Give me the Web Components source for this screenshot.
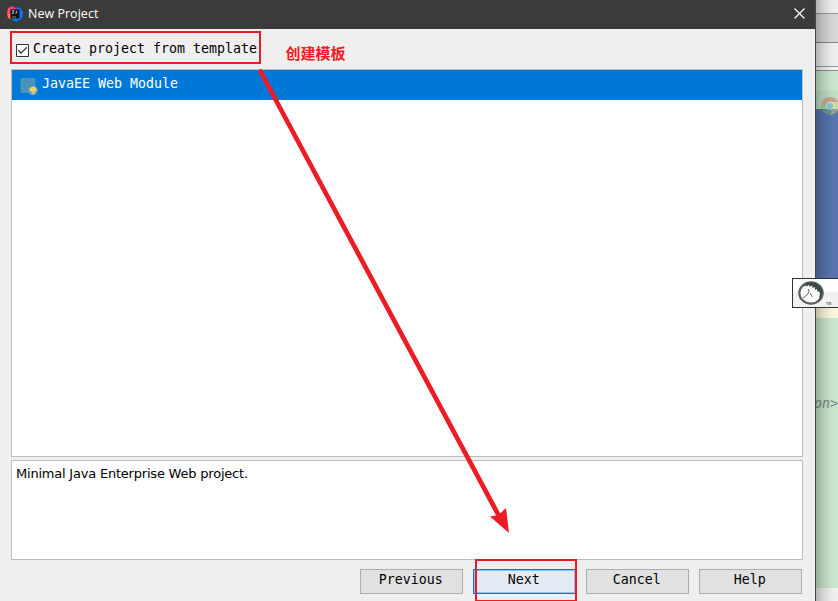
<!DOCTYPE html>
<html lang="en"><head><meta charset="utf-8"><title>New Project</title>
<style>html,body{margin:0;width:838px;height:601px;overflow:hidden;background:#efefef}</style></head>
<body><project-screen></project-screen>
<script>
const define=(name,markup)=>customElements.define(name,class extends HTMLElement{
  connectedCallback(){
    if(this.shadowRoot)return;
    const t=document.createElement('template');t.innerHTML=markup;
    this.attachShadow({mode:'open'}).append(t.content.cloneNode(true));
  }
});
define('title-bar',`<style>
:host{display:flex;align-items:center;height:29px;box-sizing:border-box;background:#3b3b3b;color:#fff;padding:0 10px 2px 7px;font:12.4px "Open Sans","Noto Sans",sans-serif}
.t{margin-left:5px;flex:1;white-space:nowrap;letter-spacing:.08px}
svg{display:block;flex:none}.c{margin-bottom:1px}</style>
<svg width="16" height="16" viewBox="0 0 16 16"><path d="M1 2 6 0 8 3 5 13 1 12 3 8 0 7Z" fill="#fb4b6b"/><path d="M0 7 4 8 5 13 1 12Z" fill="#f57b51"/><path d="M9 1 13 2 16 6 15 12 9 16 5 13 12 10Z" fill="#087cfa"/><path d="M6 0 9 2 10 4 4 6Z" fill="#e4347c"/><path d="M3.4 3.4H12.5V12.5H3.4Z" fill="#15131a"/><path d="M5 4.8H7.4M6.2 5V7.5H5M9.6 4.8V7H8.2" fill="none" stroke="#ccc" stroke-width=".9"/><path d="M5 11H9" stroke="#888"/></svg>
<span class="t"><slot></slot></span>
<svg class="c" width="11" height="11" viewBox="0 0 11 11"><path d="M.5.5 10.5 10.5M10.5.5.5 10.5" stroke="#fff" stroke-width="1.2"/></svg>`);
define('check-option',`<style>
:host{display:flex;align-items:center;height:40px;padding:0 0 0 16px;box-sizing:border-box;font:13.29px/16px "DejaVu Sans Mono",monospace;color:#000}
svg{display:block;margin:3px 4px 0 0}span{white-space:nowrap}</style>
<svg width="13" height="13" viewBox="0 0 13 13"><path d="M.5.5H12.5V12.5H.5Z" fill="#fff" stroke="#333"/><path d="M2.3 6.3 5 9.1 10.8 3.3" fill="none" stroke="#333" stroke-width="1.3"/></svg><span><slot></slot></span>`);
define('template-list',`<style>
:host{display:block;box-sizing:border-box;height:388px;border:1px solid #bcbcbc;background:#fff;margin:0 12px 0 11px}</style><slot></slot>`);
define('template-row',`<style>
:host{display:flex;align-items:center;height:30px;background:#0078d7;color:#fff;padding-left:8px;font:13.29px/16px "DejaVu Sans Mono",monospace}
svg{display:block;margin:3px 4px 0 0}span{margin-top:-2px;white-space:nowrap}</style>
<svg width="18" height="18" viewBox="0 0 18 18"><path d="M.5 0H15.5V15H.5Z" fill="#4793b9"/><circle cx="13" cy="12.5" r="4.7" fill="#6aa6c4"/><path d="M9.5 11 11 9.2 14 8.8 16.4 10.5 16.6 12.6 14.8 13.2 14.3 16 12.6 16.2 12.4 13.6 10 13.2Z" fill="#f5d25b"/></svg><span><slot></slot></span>`);
define('template-description',`<style>
:host{display:block;box-sizing:border-box;height:100px;border:1px solid #bcbcbc;background:#fff;color:#000;margin:3px 12px 0 11px;padding:5px 4px;font:13px/16px "DejaVu Sans",Verdana,sans-serif;letter-spacing:-.21px;white-space:nowrap}</style><slot></slot>`);
define('button-bar',`<style>
:host{display:flex;justify-content:flex-end;gap:10px;padding:9px 13px 0 0}</style><slot></slot>`);
define('dialog-button',`<style>
:host{display:block;box-sizing:border-box;width:103px;height:25px;border:1px solid #adadad;background:#e1e1e1;color:#000;text-align:center;padding:2px 1.4px 0 0;font:13.29px/16px "DejaVu Sans Mono",monospace}
:host([primary]){border-color:#0078d7;background:#e3ecf5;box-shadow:inset 0 0 0 1px #8cc3f2}
</style><span><slot></slot></span>`);
define('project-dialog',`<style>
:host{display:flex;flex-direction:column;width:815px;height:601px;background:#efefef}</style>
<title-bar>New Project</title-bar>
<check-option>Create project from template</check-option>
<template-list><template-row>JavaEE Web Module</template-row></template-list>
<template-description>Minimal Java Enterprise Web project.</template-description>
<button-bar><dialog-button>Previous</dialog-button><dialog-button primary>Next</dialog-button><dialog-button>Cancel</dialog-button><dialog-button>Help</dialog-button></button-bar>`);
define('editor-backdrop',`<style>
:host{display:flex;flex-direction:column;position:relative;box-sizing:border-box;width:23px;height:601px;border-left:1px solid #484848;overflow:hidden;background:#f5f5f5}
div{flex:none;box-sizing:border-box}
.a{height:14px;background:#efefef;border-bottom:1px solid #999}.b{height:29px;background:#d9d9d9;border-bottom:1px solid #858585}
.c{height:24px;background:#f0f0f0;border-bottom:1px solid #999}.d{height:4px;background:#f6f6f6;border-bottom:1px solid #929292}
.e{height:38px;background:linear-gradient(#cbe8cf 20px,#c1dfc5 20px)}.f{height:185px;background:#5875b0}.g{height:24px;background:#fff8df}
.h{height:270px;background:#c9e8ce;display:flex;align-items:flex-start;padding-top:78px;font:italic 13.3px/16px "DejaVu Sans Mono",monospace;color:#7d8580}
.h span{margin-left:-2px;white-space:nowrap}
.i{height:13px;background:#f1f1f1}
:host::after{content:"";position:absolute;inset:0;background:linear-gradient(90deg,rgba(0,0,0,.25),rgba(0,0,0,.12) 7px,rgba(0,0,0,.02) 16px,transparent 22px)}
svg{position:absolute;left:5px;top:97px;opacity:.48}</style>
<div class="a"></div><div class="b"></div><div class="c"></div><div class="d"></div><div class="e"></div><div class="f"></div><div class="g"></div><div class="h"><span>on&gt;</span></div><div class="i"></div>
<svg width="18" height="18" viewBox="0 0 18 18"><circle cx="9" cy="9" r="9" fill="#76b879"/><path d="M1 5A9 9 0 0 1 17 5H9L5 10Z" fill="#d56a5d"/><path d="M9 5H17A9 9 0 0 1 9 18L13 10Z" fill="#e6d36c"/><circle cx="9" cy="9" r="4.2" fill="#fff"/><circle cx="9" cy="9" r="3.3" fill="#59a9d8"/></svg>`);
define('floating-badge',`<style>
:host{display:block;position:absolute;left:792px;top:278px;width:46px;height:30px;box-sizing:border-box;border:1px solid #333;border-right:0;background:linear-gradient(#fff 13px,#f1f1f1 13px)}
svg{display:block}text{font:bold 3.6px "Liberation Sans",sans-serif;fill:#666}</style>
<svg width="45" height="28" viewBox="0 0 45 28"><ellipse cx="18" cy="14" rx="11.7" ry="10.6" fill="#fafafa" stroke="#59625f" stroke-width="2.2"/><path d="M11 6Q18 1 24 5Q30 9 29 15Q28 20 24 23Q27 19 27 14L25.5 12 24.5 13 24 10 22 11 21.8 8 19.7 9 19 6.5 16.8 8 16 5.7 13.5 7.5 12.5 6.3 10 8Z" fill="#3c4946"/><path d="M10 19Q14 17 16 13L15.5 10M17 14 19.5 18" fill="none" stroke="#666" stroke-width="1"/><text x="33" y="25.5">TM</text></svg>`);
define('tutorial-markup',`<style>
:host{position:absolute;inset:0;display:block;pointer-events:none}svg{display:block}
text{font:bold 15px "Noto Sans CJK SC",sans-serif;fill:#ed1c24}</style>
<svg width="838" height="601" viewBox="0 0 838 601"><g fill="none" stroke="#ed1c24" stroke-width="2"><rect x="11" y="32" width="249" height="31"/><rect x="476" y="560" width="100" height="41"/></g><path d="M260.5 71.5 499 516" stroke="#ed1c24" stroke-width="4.7" stroke-linecap="round"/><path d="M509 533 490 516.5 498.5 515 506 508Z" fill="#ed1c24"/><text x="285.5" y="59">创建模板</text></svg>`);
define('project-screen',`<style>
:host{display:flex;position:relative;width:838px;height:601px;overflow:hidden}</style>
<project-dialog></project-dialog><editor-backdrop></editor-backdrop><floating-badge></floating-badge><tutorial-markup></tutorial-markup>`);
</script></body></html>
